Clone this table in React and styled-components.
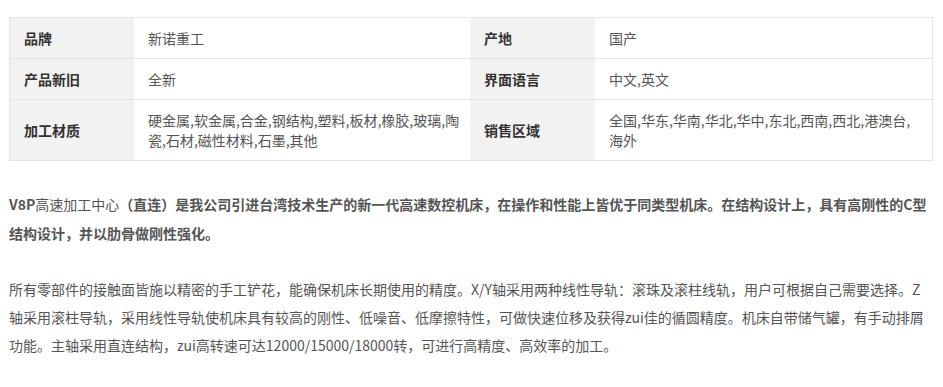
import React from 'react';
import styled, { createGlobalStyle } from 'styled-components';

const GlobalStyle = createGlobalStyle`
  body {
    margin: 0;
    background: #fff;
    font-family: "Microsoft YaHei", "Noto Sans CJK SC", sans-serif;
  }
`;

const specs = [
  ['品牌', '新诺重工', '产地', '国产'],
  ['产品新旧', '全新', '界面语言', '中文,英文'],
  [
    '加工材质',
    '硬金属,软金属,合金,钢结构,塑料,板材,橡胶,玻璃,陶瓷,石材,磁性材料,石墨,其他',
    '销售区域',
    '全国,华东,华南,华北,华中,东北,西南,西北,港澳台,海外',
  ],
];

const App = () => {
  return (
    <>
      <GlobalStyle />
      <Page>
        <SpecTable>
          {specs.map((row, i) => (
            <Row key={i} last={i === specs.length - 1}>
              <Label>{row[0]}</Label>
              <Value padRight={6}>{row[1]}</Value>
              <Label>{row[2]}</Label>
              <Value padRight={14}>{row[3]}</Value>
            </Row>
          ))}
        </SpecTable>

        <Intro>
          V8P<Plain>高速加工中心</Plain>（直连）是我公司引进台湾技术生产的新一代高速数控机床，在操作和性能上皆优于同类型机床。在结构设计上，具有高刚性的C型结构设计，并以肋骨做刚性强化。
        </Intro>

        <Para>
          所有零部件的接触面皆施以精密的手工铲花，能确保机床长期使用的精度。X/Y轴采用两种线性导轨：滚珠及滚柱线轨，用户可根据自己需要选择。Z轴采用滚柱导轨，采用线性导轨使机床具有较高的刚性、低噪音、低摩擦特性，可做快速位移及获得zui佳的循圆精度。机床自带储气罐，有手动排屑功能。主轴采用直连结构，zui高转速可达12000/15000/18000转，可进行高精度、高效率的加工。
        </Para>
      </Page>
    </>
  );
};

const Page = styled.div`
  width: 925px;
  padding: 17px 9px 0;
`;

const SpecTable = styled.div`
  width: 922px;
  border: 1px solid #e4e4e4;
  font-size: 14px;
  line-height: 20px;
`;

const Row = styled.div`
  display: grid;
  grid-template-columns: 124px 336px 125px 337px;
  border-bottom: ${props => (props.last ? 'none' : '1px solid #e4e4e4')};
`;

const Label = styled.div`
  background: #f2f2f2;
  color: #333;
  font-weight: bold;
  padding: 10px 14px;
  display: flex;
  align-items: center;
`;

const Value = styled.div`
  background: #fff;
  color: #555;
  padding: 10px ${props => props.padRight}px 10px 14px;
  display: flex;
  align-items: center;
`;

const Intro = styled.p`
  margin: 29px 0 0;
  font-size: 14px;
  line-height: 29px;
  font-weight: bold;
  color: #555;
`;

const Plain = styled.span`
  font-weight: normal;
`;

const Para = styled.p`
  margin: 27px 0 0;
  font-size: 14px;
  line-height: 28px;
  color: #555;
`;

export default App;
